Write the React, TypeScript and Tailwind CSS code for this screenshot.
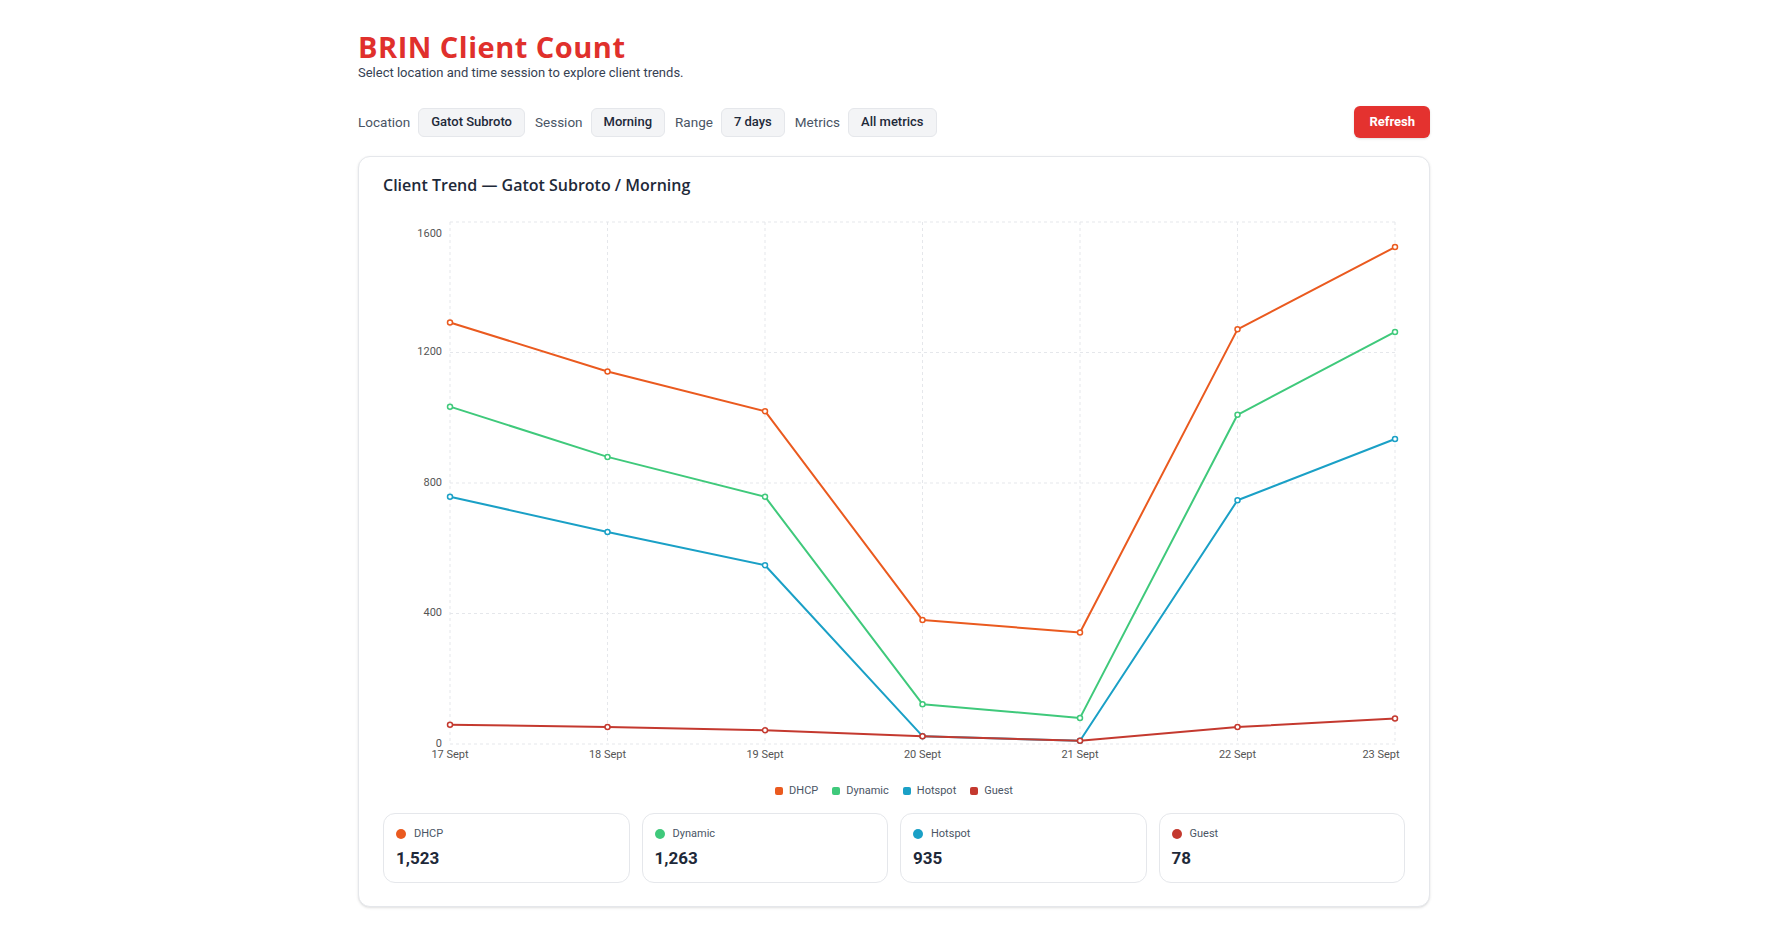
import React from "react"

const days = ["17 Sept", "18 Sept", "19 Sept", "20 Sept", "21 Sept", "22 Sept", "23 Sept"]

const series = [
  { name: "DHCP", color: "#ea5a1f", data: [1292, 1142, 1020, 380, 342, 1271, 1523] },
  { name: "Dynamic", color: "#3fc97b", data: [1034, 880, 758, 122, 80, 1009, 1263] },
  { name: "Hotspot", color: "#1aa0c6", data: [758, 650, 548, 24, 10, 747, 935] },
  { name: "Guest", color: "#c4392f", data: [59, 52, 42, 24, 10, 52, 78] },
]

const filters = [
  { label: "Location", value: "Gatot Subroto" },
  { label: "Session", value: "Morning" },
  { label: "Range", value: "7 days" },
  { label: "Metrics", value: "All metrics" },
]

// chart geometry (svg px)
const W = 1022
const H = 565
const X0 = 67
const STEP = 157.5
const YTOP = 16
const Y0 = 538
const ticks = [0, 400, 800, 1200, 1600]

const xAt = (i: number) => X0 + i * STEP
const yAt = (v: number) => Y0 - (v / 1600) * (Y0 - YTOP)

function TrendChart() {
  return (
    <svg width={W} height={H} viewBox={`0 0 ${W} ${H}`} className="block">
      {ticks.map((t) => (
        <line key={t} x1={X0} x2={xAt(6)} y1={yAt(t)} y2={yAt(t)} stroke="#e5e7eb" strokeDasharray="3 3" />
      ))}
      {days.map((d, i) => (
        <line key={d} x1={xAt(i)} x2={xAt(i)} y1={YTOP} y2={Y0} stroke="#e5e7eb" strokeDasharray="3 3" />
      ))}
      {ticks.map((t) => (
        <text
          key={t}
          x={59}
          y={t === 1600 ? 28 : yAt(t)}
          textAnchor="end"
          dominantBaseline="middle"
          fontSize="11"
          fill="#555"
        >
          {t}
        </text>
      ))}
      {days.map((d, i) => (
        <text
          key={d}
          x={i === 6 ? 998 : xAt(i)}
          y={549}
          textAnchor="middle"
          dominantBaseline="middle"
          fontSize="11"
          fill="#555"
        >
          {d}
        </text>
      ))}
      {series.map((s) => (
        <g key={s.name}>
          <polyline
            fill="none"
            stroke={s.color}
            strokeWidth={2}
            strokeLinejoin="round"
            points={s.data.map((v, i) => `${xAt(i)},${yAt(v)}`).join(" ")}
          />
          {s.data.map((v, i) => (
            <circle key={i} cx={xAt(i)} cy={yAt(v)} r={2.5} fill="#fff" stroke={s.color} strokeWidth={1.5} />
          ))}
        </g>
      ))}
    </svg>
  )
}

export default function App() {
  return (
    <div className="min-h-screen bg-white font-['Roboto',sans-serif] text-gray-800">
      <div className="max-w-6xl mx-auto px-10 pt-[31px] pb-8">
        <h1 className="text-[29px] leading-8 font-bold text-[#e0302c] font-['Open_Sans',sans-serif] tracking-[0.5px]">
          BRIN Client Count
        </h1>
        <p className="text-[13px] leading-[18px] mt-px text-gray-700">Select location and time session to explore client trends.</p>

        <div className="mt-[24px] flex items-center justify-between">
          <div className="flex items-center gap-[10px]">
            {filters.map((f) => (
              <div key={f.label} className="flex items-center gap-2">
                <span className="text-[13.5px] leading-5 text-gray-600">{f.label}</span>
                <span className="h-[29px] px-3 flex items-center rounded-md bg-gray-100 border border-gray-200 text-[13px] font-medium text-gray-800">
                  {f.value}
                </span>
              </div>
            ))}
          </div>
          <button className="h-8 px-[15px] rounded-md bg-[#e4322f] text-white text-[13px] font-bold shadow-sm">
            Refresh
          </button>
        </div>

        <div className="mt-[18px] rounded-xl border border-gray-200 shadow-sm bg-white px-6 pt-[18px] pb-[23px]">
          <h2 className="text-[16px] leading-5 font-semibold text-gray-800 font-['Open_Sans',sans-serif]">
            Client Trend — Gatot Subroto / Morning
          </h2>
          <div className="mt-[11px]">
            <TrendChart />
          </div>
          <div className="mt-[10px] h-5 flex items-center justify-center gap-3.5 text-[11px] text-gray-600">
            {series.map((s) => (
              <div key={s.name} className="flex items-center gap-1.5">
                <span className="w-2 h-2 rounded-[2px]" style={{ backgroundColor: s.color }} />
                {s.name}
              </div>
            ))}
          </div>
          <div className="mt-3 grid grid-cols-4 gap-3">
            {series.map((s) => (
              <div key={s.name} className="h-[70px] rounded-xl border border-gray-200 px-3 pt-3">
                <div className="flex items-center gap-2 text-[11px] text-gray-600 leading-4">
                  <span className="w-2.5 h-2.5 rounded-full" style={{ backgroundColor: s.color }} />
                  {s.name}
                </div>
                <div className="mt-1 text-[17px] font-bold text-gray-800 leading-6">
                  {s.data[6].toLocaleString("en-US")}
                </div>
              </div>
            ))}
          </div>
        </div>
      </div>
    </div>
  )
}
